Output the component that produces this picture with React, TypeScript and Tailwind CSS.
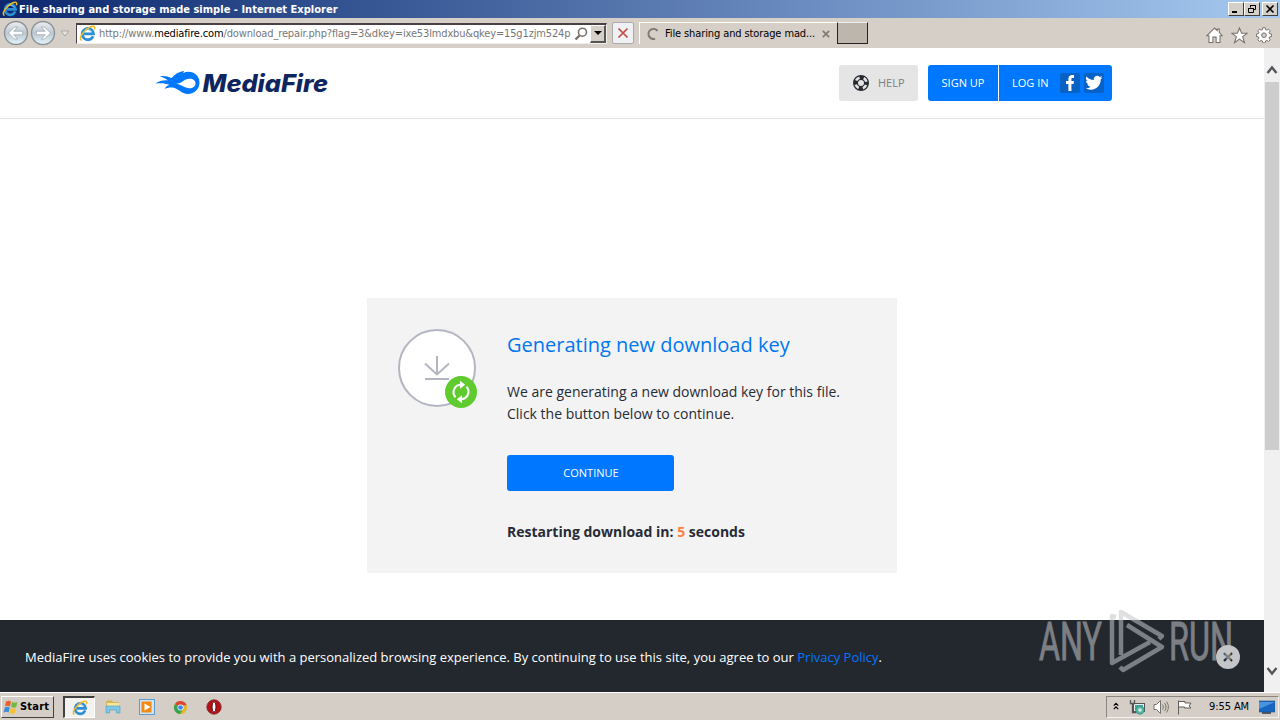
import type { ReactNode } from "react";

const UI_FONT = "font-['DejaVu_Sans_Condensed','DejaVu_Sans',sans-serif]";

function IeIcon({ className }: { className?: string }) {
  return (
    <svg viewBox="0 0 16 16" className={className} fill="none">
      <path d="M13.2 10.6A5.3 5.3 0 1 1 13.6 8.4H4.6" stroke="#2b8fd6" strokeWidth="2.6" />
      <path d="M4.6 7A4 4 0 0 1 12 6.6" stroke="#7cc8f2" strokeWidth="1" />
      <path d="M2.4 14.6C-1 12 5 4.6 10 2.2c3.6-1.8 5.6-.9 4.4 2" stroke="#f0bb28" strokeWidth="1.5" />
    </svg>
  );
}

function NavArrow({ flip }: { flip?: boolean }) {
  return (
    <svg viewBox="0 0 26 26" className={flip ? "size-[26px] -scale-x-100" : "size-[26px]"}>
      <defs>
        <linearGradient id="nav" x1="0" y1="0" x2="0" y2="1">
          <stop offset="0" stopColor="#eef0f2" />
          <stop offset=".5" stopColor="#bcc8d1" />
          <stop offset="1" stopColor="#e3f5fa" />
        </linearGradient>
      </defs>
      <circle cx="13" cy="13" r="11.5" fill="url(#nav)" stroke="#8b9299" strokeWidth="1.4" />
      <path d="M5.5 13l6-6h3.200l-4 4.200h9v3.600h-9l4 4.200h-3.200z" fill="#fff" stroke="#a0a8ae" strokeWidth=".8" />
    </svg>
  );
}

function WinButton({ children }: { children: ReactNode }) {
  return (
    <button className="flex h-[14px] w-4 items-center justify-center border border-t-white border-l-white border-r-[#404040] border-b-[#404040] bg-[#d4d0c8]">
      <svg viewBox="0 0 12 10" className="h-[10px] w-3 shrink-0" fill="none" stroke="#000">{children}</svg>
    </button>
  );
}

function TitleBar() {
  return (
    <div className="flex h-[18px] items-center bg-linear-to-r from-[#0d286e] via-[#5777af] to-[#a6caf0] pl-[2px] pr-[2px]">
      <IeIcon className="size-4" />
      <span className="ml-px flex-1 whitespace-nowrap pt-px text-[11px] font-bold leading-[17px] tracking-[0.02px] text-white">
        File sharing and storage made simple - Internet Explorer
      </span>
      <WinButton><path d="M2 8h5" strokeWidth="2" /></WinButton>
      <WinButton>
        <path d="M4.5 3.5v-2h5v4h-2M4 1.5h6M2.5 4.5h5v4h-5zM2 4.5h6" />
      </WinButton>
      <div className="w-[2px]" />
      <WinButton><path d="M2.5 1.5l7 7M9.5 1.5l-7 7" strokeWidth="1.6" /></WinButton>
    </div>
  );
}

function Toolbar() {
  return (
    <div className="flex h-[30px] items-center bg-[#d5cfc7] pl-[3px] pr-2 text-[11px]">
      <NavArrow />
      <div className="w-px" />
      <NavArrow flip />
      <svg viewBox="0 0 10 7" className="ml-1 h-[7px] w-[10px]">
        <path d="M1 1h8L5 6z" fill="#e8e5e0" stroke="#aaa6a0" />
      </svg>
      <div className="ml-[6px] flex h-[21px] w-[531px] items-center border border-t-2 border-[#f1eeea] border-t-[#4a4145] border-l-[#4a4145] bg-white pl-[2px]">
        <IeIcon className="size-[17px] shrink-0" />
        <span className="ml-[3px] min-w-0 flex-1 whitespace-nowrap pt-px tracking-[-0.145px] text-[#777]">
          http://www.<span className="text-black">mediafire.com</span>/download_repair.php?flag=3&amp;dkey=ixe53lmdxbu&amp;qkey=15g1zjm524p
        </span>
        <svg viewBox="0 0 14 14" className="mr-[2px] size-[14px] shrink-0" fill="none" stroke="#77716d">
          <circle cx="8.5" cy="5.2" r="4" strokeWidth="1.600" />
          <path d="M5.5 8.5L1.5 12.5" strokeWidth="2.400" />
        </svg>
        <div className="flex h-[18px] w-4 shrink-0 items-center justify-center border border-r-2 border-b-2 border-t-white border-l-white border-r-[#555] border-b-[#555] bg-[#d4d0c8]">
          <svg viewBox="0 0 8 4" className="h-1 w-2"><path d="M0 0h8L4 4z" /></svg>
        </div>
      </div>
      <div className="ml-[5px] flex h-[22px] w-[22px] items-center justify-center rounded-[2px] border border-[#aaa9ab] bg-[#f0f1f4]">
        <svg viewBox="0 0 12 12" className="size-3">
          <path d="M1.5 1.5l9 9M10.5 1.5l-9 9" stroke="#c34a46" strokeWidth="1.7" />
        </svg>
      </div>
      <div className="ml-[5px] flex h-[22px] w-[198px] items-center border-t border-l border-white pl-[6px]">
        <svg viewBox="0 0 14 14" className="size-[14px] shrink-0" fill="none">
          <path d="M11.5 4A5 5 0 1 0 9 11.7" stroke="#7f7972" strokeWidth="2" />
        </svg>
        <span className="ml-[5px] flex-1 whitespace-nowrap pt-px tracking-[-0.11px] text-black">File sharing and storage mad...</span>
        <svg viewBox="0 0 8 8" className="mr-[7px] size-2 shrink-0">
          <path d="M.8.8l6.4 6.4M7.2.8L.8 7.2" stroke="#807a74" strokeWidth="1.7" />
        </svg>
      </div>
      <div className="h-[22px] w-[31px] border border-t-[#eee] border-r-[#222] border-b-[#222] border-l-[#222] bg-[#bdb6ac]" />
      <div className="ml-auto flex items-center gap-2 pt-1">
        <svg viewBox="0 0 16 16" className="size-[17px]" fill="#fff" stroke="#77726d">
          <path d="M8 1L.8 8.2h2v6.300h3.700v-5h3v5h3.700V8.200h2L12.500 5V2h-2v1.400z" />
        </svg>
        <svg viewBox="0 0 16 16" className="size-[17px]" fill="#fff" stroke="#77726d">
          <path d="M8 .8l2 5h5.300L11 9.100l1.700 5.700L8 11.400l-4.700 3.400L5 9.100.7 5.800H6z" />
        </svg>
        <svg viewBox="0 0 16 16" className="size-4" fill="#fff" stroke="#77726d">
          <path d="M6.800.7h2.400l.4 2 1.200.5 1.700-1.100 1.700 1.700-1.100 1.700.5 1.200 2 .4v2.400l-2 .4-.5 1.200 1.100 1.700-1.700 1.700-1.700-1.100-1.200.5-.4 2H6.800l-.4-2-1.200-.5-1.700 1.100-1.700-1.700 1.100-1.700-.5-1.200-2-.4V7.100l2-.4.5-1.200-1.100-1.700 1.700-1.700 1.700 1.100 1.200-.5z" />
          <circle cx="8" cy="8.2" r="2.300" fill="#d5cfc7" />
        </svg>
      </div>
    </div>
  );
}

function Logo() {
  return (
    <svg viewBox="0 0 174 28" className="h-7 w-[174px]">
      <path
        d="M.5 14.500c4-2.600 8-3.500 12.500-3C11 10 8.500 8.500 5 7.300c4.500-.6 8 .4 11.500 1.700 3-3.800 7.500-6.300 13-7.300-1 .9-1.300 1.500-1.200 2.200C36 .5 44.500 5 44.500 13.600 44.500 20 39.500 25 33 25c-7 0-9-5.400-15.500-6.400-2.600-.4-5.200.1-8 1.400 1.200-2 2.600-3.300 5-4.200-4.200-1.800-8.500-2-14-1.300z"
        fill="#0077ff"
      />
      <path d="M20.500 14.800c6 .4 8.500-5 14-5 3.800 0 6 2 6 4.700 0 2.900-2.500 4.800-6 4.800-5.200 0-7.500-4-14-4.500z" fill="#fff" />
      <text
        x="47.500" y="22.500" textLength="125.500" lengthAdjust="spacingAndGlyphs"
        fill="#0f2560"
        className="font-['Inter','Liberation_Sans',sans-serif] text-[24px] font-extrabold italic"
      >
        MediaFire
      </text>
    </svg>
  );
}

function PageHeader() {
  return (
    <header className="flex h-[71px] items-center justify-between border-b border-[#e4e4e4] pl-[155px] pr-[152px]">
      <Logo />
      <div className="flex h-9 text-[11px]">
        <button className="mr-[10px] flex w-[79px] items-center rounded-[3px] bg-[#e5e5e5] pl-[14px] text-[#7d7d7d]">
          <svg viewBox="0 0 16 16" className="mr-[9px] size-4" fill="none">
            <circle cx="8" cy="8" r="5.5" stroke="#272b30" strokeWidth="5" />
            <circle cx="8" cy="8" r="5.5" stroke="#e5e5e5" strokeWidth="2.600" strokeDasharray="4.3 4.34" strokeDashoffset="6.470" />
          </svg>
          <span>HELP</span>
        </button>
        <button className="w-[71px] rounded-l-[3px] border-r border-white bg-[#0077ff] text-white">
          <span>SIGN UP</span>
        </button>
        <button className="flex w-[113px] items-center rounded-r-[3px] bg-[#0077ff] pl-[13px] text-white">
          <span className="w-12 text-left">LOG IN</span>
          <svg viewBox="0 0 20 20" className="size-5">
            <rect width="20" height="20" rx="2" fill="#0862c5" />
            <path d="M8.4 18v-7H6V8h2.400V6c0-2.800 1.500-4 3.800-4H14v3h-1.500c-.9 0-1.100.4-1.100 1.200V8H14l-.4 3h-2.200v7z" fill="#fff" />
          </svg>
          <svg viewBox="0 0 20 20" className="ml-1 size-5">
            <rect width="20" height="20" rx="2" fill="#0862c5" />
            <path
              transform="translate(1.4 1.2) scale(.71)"
              d="M23.95 4.57a10 10 0 0 1-2.82.77 4.96 4.96 0 0 0 2.16-2.72c-.95.55-2 .96-3.12 1.18a4.92 4.92 0 0 0-8.38 4.48C7.69 8.09 4.07 6.13 1.64 3.16a4.93 4.93 0 0 0 1.52 6.57 4.9 4.9 0 0 1-2.23-.62v.06a4.92 4.92 0 0 0 3.95 4.83 5 5 0 0 1-2.21.08 4.94 4.94 0 0 0 4.6 3.42A9.87 9.87 0 0 1 0 19.54a14 14 0 0 0 7.55 2.21c9.05 0 14-7.5 14-13.98l-.02-.64a9.9 9.9 0 0 0 2.42-2.56z"
              fill="#fff"
            />
          </svg>
        </button>
      </div>
    </header>
  );
}

function DownloadCard() {
  return (
    <section className="mx-auto mt-[179px] flex h-[275px] w-[530px] bg-[#f3f3f3] pl-[31px] pt-[31px]">
      <svg viewBox="0 0 80 80" className="size-20 shrink-0" fill="none">
        <circle cx="39" cy="39" r="38" fill="#fff" stroke="#b3b5c1" strokeWidth="2" />
        <path d="M39 27v18M27 34.5l12 11 12-11M27 50h24" stroke="#b3b5c1" strokeWidth="2" />
        <circle cx="63" cy="63" r="16" fill="#5fcb2f" />
        <g stroke="#fff" strokeWidth="2.1">
          <path d="M57.5 68.2a7.400 7.400 0 0 1 5.500-12.400" />
          <path d="M68.500 57.800a7.400 7.400 0 0 1-5.500 12.400" />
        </g>
        <path d="M62 51.800l5.200 4-5.200 4zM64 74.200l-5.200-4 5.200-4z" fill="#fff" />
      </svg>
      <div className="ml-[29px] text-[14px] leading-[22px] text-[#272b35]">
        <h1 className="pt-px text-[20px] leading-[30px] text-[#0077ee]">Generating new download key</h1>
        <p className="mt-[21px]">
          We are generating a new download key for this file.
          <br />
          Click the button below to continue.
        </p>
        <button className="mt-[30px] block h-9 w-[167px] rounded-[3px] bg-[#0077ff] pl-px text-[11px] text-white">
          CONTINUE
        </button>
        <p className="mt-[30px] font-bold">
          Restarting download in: <span className="text-[#fa8142]">5</span> seconds
        </p>
      </div>
    </section>
  );
}

function Watermark() {
  return (
    <svg viewBox="0 0 216 80" className="absolute left-[1036px] top-[557px] h-20 w-[216px] overflow-visible" fill="none" opacity=".55">
      <g fill="#c5c7cb" stroke="#c5c7cb" strokeWidth=".9" className="font-['Roboto','Liberation_Sans',sans-serif] text-[53px]">
        <text x="3" y="54.500" textLength="63" lengthAdjust="spacingAndGlyphs">ANY</text>
        <text x="133" y="54.500" textLength="64" lengthAdjust="spacingAndGlyphs">RUN</text>
      </g>
      <g stroke="#c5c7cb" strokeWidth="4.500" strokeLinejoin="round">
        <path d="M80 12l-4-1v47l38-21" />
        <path d="M85 50V7l41 24-3 3" />
        <path d="M91 20l35 22-39 23-3-3" />
      </g>
    </svg>
  );
}

function CookieBar() {
  return (
    <div className="mt-auto flex h-[72px] items-center justify-between bg-[#23282f] pl-[25px] pr-6 pt-[2px] text-[13px] text-white">
      <p className="pt-[2px] tracking-[0.005px]">
        MediaFire uses cookies to provide you with a personalized browsing experience. By continuing to use this site, you agree to our{" "}
        <a className="text-[#0077ff]">Privacy Policy</a>.
      </p>
      <svg viewBox="0 0 24 24" className="size-6">
        <circle cx="12" cy="12" r="12" fill="#c3c5c8" />
        <path d="M8 8l8 8M16 8l-8 8" stroke="#23282f" strokeWidth="2.200" />
      </svg>
    </div>
  );
}

function Scrollbar() {
  return (
    <div className="flex w-4 flex-col items-center bg-[#f0f0f0]">
      <svg viewBox="0 0 16 34" className="h-[34px] w-4" fill="none">
        <path d="M3.500 25L8 19.500l4.500 5.500" stroke="#55565a" strokeWidth="2.400" />
      </svg>
      <div className="h-[368px] w-[14px] bg-[#cdcdcd]" />
      <svg viewBox="0 0 16 34" className="mt-auto mb-[4px] h-[34px] w-4" fill="none">
        <path d="M3.500 14L8 19.500l4.500-5.500" stroke="#55565a" strokeWidth="2.400" />
      </svg>
    </div>
  );
}

function Taskbar() {
  return (
    <div className="flex h-7 items-center border-t border-white bg-[#d4cec6] pl-px pr-px pt-px text-[11px] text-black">
      <button className="flex h-[22px] w-[53px] items-center border border-t-white border-l-white border-r-[#404040] border-b-[#404040] pl-px font-bold">
        <svg viewBox="0 0 16 16" className="size-4 shrink-0">
          <path d="M3 2.500c2-1 3.500-1 5 0L7 7.500c-1.500-1-3-1-5 0z" fill="#e8602c" />
          <path d="M9 3c2 1 3.500 1 5.500 0l-1.300 5C11.500 9 10 9 8 8z" fill="#76b83e" />
          <path d="M1.800 8.500c2-1 3.500-1 5 0l-1.200 5c-1.500-1-3-1-5 0z" fill="#3d8bd8" />
          <path d="M7.800 9c2 1 3.500 1 5.200 0l-1.200 5c-2 1-3.600 1-5.200 0z" fill="#f5c22f" />
        </svg>
        <span className="ml-px tracking-[0.2px]">Start</span>
      </button>
      <div className="ml-[9px] flex h-[22px] w-8 items-center justify-center border border-t-2 border-l-2 border-[#fff] border-t-[#404040] border-l-[#404040] bg-[#f4f2ef]">
        <IeIcon className="size-4" />
      </div>
      <svg viewBox="0 0 16 16" className="ml-[10px] size-4">
        <path d="M1 3l1-1.500h5L8 3h6v6H1z" fill="#d9b455" />
        <path d="M2 4h12v5H2z" fill="#f7e69a" />
        <path d="M1 7h14v7h-3.500v-3h-7v3H1z" fill="#7fc7e5" stroke="#4b9dc6" strokeWidth=".6" />
      </svg>
      <svg viewBox="0 0 16 16" className="ml-[18px] size-4">
        <rect x=".5" y=".5" width="15" height="15" fill="#d2e5f5" stroke="#5a9bd0" />
        <rect x="2.500" y="2.500" width="10" height="11" fill="#f08a16" />
        <circle cx="7.500" cy="8" r="4.800" fill="#f28b14" />
        <path d="M5.500 4.500l6 3.500-6 3.500z" fill="#fff" />
      </svg>
      <svg viewBox="0 0 16 16" className="ml-[18px] size-[15px]">
        <circle cx="8" cy="8" r="7" fill="#e2b92c" />
        <path d="M8 8L2 4.400A7 7 0 0 1 14.500 5.500H8z" fill="#dc4437" />
        <path d="M8 8L2 4.400A7 7 0 0 0 7.500 15l3-5z" fill="#35a354" />
        <circle cx="8" cy="8" r="3.200" fill="#fff" />
        <circle cx="8" cy="8" r="2.500" fill="#4084ef" />
      </svg>
      <svg viewBox="0 0 16 16" className="ml-[18px] size-4">
        <circle cx="8" cy="8" r="7.200" fill="#b51218" stroke="#78292a" strokeWidth=".8" />
        <ellipse cx="8" cy="8" rx="2" ry="5.200" fill="#fff" stroke="#591012" />
      </svg>
      <div className="ml-auto flex h-[22px] w-[173px] items-center border border-[#f5f3ef] border-t-[#8a857e] border-l-[#8a857e] pl-[5px] pr-[3px]">
        <svg viewBox="0 0 7 9" className="mb-[3px] size-2" fill="none" stroke="#000" strokeWidth="1.300">
          <path d="M1 4l2.500-2.500L6 4M1 8l2.500-2.500L6 8" />
        </svg>
        <svg viewBox="0 0 16 16" className="ml-[9px] size-4">
          <rect x="4.500" y="4.500" width="11" height="8" fill="#e8eef0" stroke="#555" />
          <rect x="6" y="6" width="8" height="5" fill="#43a9a0" />
          <path d="M1.500 1v3.500h4V1M3.500 4.500v9h4" fill="none" stroke="#555" strokeWidth="1.300" />
          <circle cx="11" cy="11" r="4.200" fill="#55b5a5" stroke="#29867d" strokeWidth=".7" />
          <circle cx="11" cy="11" r="1.800" fill="#d6f0dc" />
        </svg>
        <svg viewBox="0 0 16 16" className="ml-2 size-4" fill="none" stroke="#77736f">
          <path d="M1 5.500h2.500l4-4v13l-4-4H1z" fill="#fff" />
          <path d="M9.500 5.500c1 1.500 1 3.500 0 5M11.500 4c2 2.500 2 5.500 0 8M13.500 2.500c2.500 3.500 2.500 7.500 0 11" />
        </svg>
        <svg viewBox="0 0 16 16" className="ml-2 size-4" fill="#fff" stroke="#625e5a">
          <path d="M1.500 1.500v14M1.500 2.500H8v1.500h6l-2 3 2 2H7.500V8h-6z" />
        </svg>
        <span className="ml-auto mr-[10px] tracking-[-0.1px]">9:55 AM</span>
        <svg viewBox="0 0 16 14" className="h-[14px] w-4">
          <rect y="1" width="16" height="11" fill="#1767c1" stroke="#174a88" strokeWidth=".6" />
          <path d="M0 2h16L0 9z" fill="#4b93df" />
          <path d="M3 13h9" stroke="#323f50" strokeWidth="1.600" />
        </svg>
      </div>
    </div>
  );
}

export default function App() {
  return (
    <div className={`flex h-[720px] w-[1280px] flex-col overflow-hidden bg-white ${UI_FONT}`}>
      <TitleBar />
      <Toolbar />
      <div className="flex h-[644px]">
        <main className="relative flex w-[1264px] flex-col font-['Open_Sans',sans-serif]">
          <PageHeader />
          <DownloadCard />
          <CookieBar />
          <Watermark />
        </main>
        <Scrollbar />
      </div>
      <Taskbar />
    </div>
  );
}
